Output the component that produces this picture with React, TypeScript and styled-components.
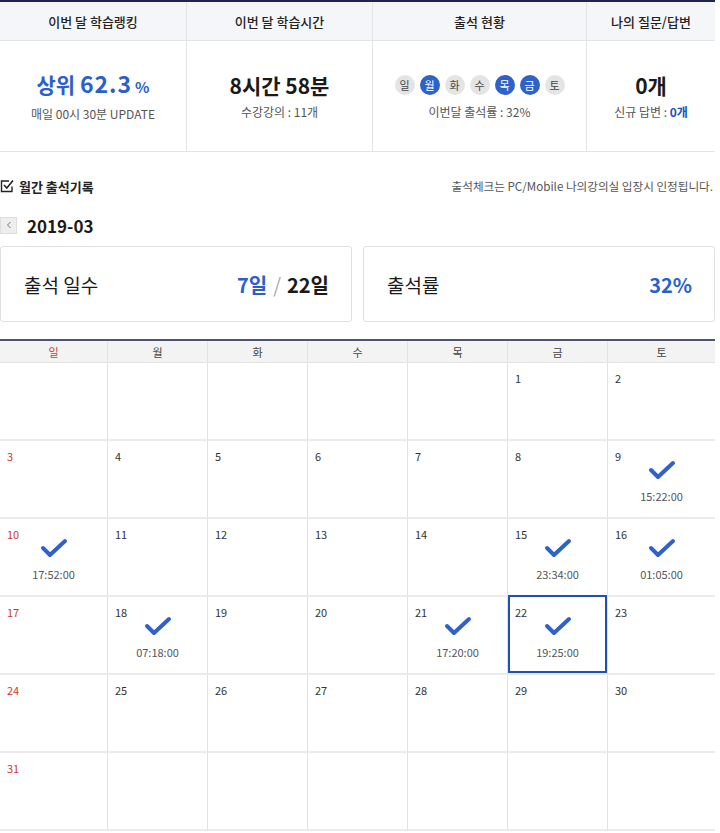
import React from 'react';
import styled, { createGlobalStyle } from 'styled-components';

const GlobalStyle = createGlobalStyle`
  html, body {
    margin: 0;
    padding: 0;
    background: #fff;
  }
  body {
    font-family: "Noto Sans CJK KR", "Noto Sans", sans-serif;
    color: #222;
  }
`;

const BLUE = '#2b5fcc';

const Page = styled.div`
  width: 715px;
`;

/* ---------- top stats ---------- */
const Stats = styled.div`
  display: grid;
  grid-template-columns: 186px 186px 214px 1fr;
  border-top: 2px solid #1c2550;
  border-bottom: 1px solid #e3e4e8;
`;

const StatCol = styled.div`
  display: flex;
  flex-direction: column;
  border-left: 1px solid #e3e4e8;
  &:first-child {
    border-left: none;
  }
`;

const StatHead = styled.div`
  height: 39px;
  display: flex;
  align-items: center;
  justify-content: center;
  background: #f5f6f8;
  border-bottom: 1px solid #e3e4e8;
  font-size: 13px;
  font-weight: 500;
  color: #222;
  padding-top: 1px;
  box-sizing: border-box;
`;

const StatBody = styled.div`
  height: 110px;
  display: flex;
  flex-direction: column;
  align-items: center;
  justify-content: center;
  gap: 3px;
  padding-bottom: 1px;
  box-sizing: border-box;
`;

const BigValue = styled.div<{ $blue?: boolean }>`
  font-size: 21px;
  font-weight: 700;
  line-height: 30px;
  color: ${({ $blue }) => ($blue ? BLUE : '#1a1a1a')};
`;

const Digits = styled.span`
  font-size: 23px;
  letter-spacing: 1px;
`;

const Percent = styled.span`
  font-size: 15px;
  margin-left: 3px;
`;

const SubText = styled.div`
  font-size: 12px;
  color: #555;
  line-height: 18px;
`;

const Strong = styled.span`
  color: #1a4fbf;
  font-weight: 700;
`;

const Days = styled.div`
  display: flex;
  gap: 5px;
  height: 30px;
  align-items: center;
`;

const DayDot = styled.span<{ $on?: boolean }>`
  width: 20px;
  height: 20px;
  border-radius: 50%;
  display: flex;
  align-items: center;
  justify-content: center;
  font-size: 11px;
  background: ${({ $on }) => ($on ? '#2f62c8' : '#e4e4e4')};
  color: ${({ $on }) => ($on ? '#fff' : '#444')};
`;

/* ---------- section heading ---------- */
const SectionHead = styled.div`
  display: flex;
  justify-content: space-between;
  align-items: center;
  margin-top: 25px;
  height: 18px;
`;

const SectionTitle = styled.div`
  display: flex;
  align-items: center;
  gap: 5px;
  font-size: 13px;
  font-weight: 700;
  color: #222;
`;

const Note = styled.div`
  font-size: 11.6px;
  color: #555;
  margin-right: 2px;
`;

const MonthNav = styled.div`
  display: flex;
  align-items: center;
  gap: 10px;
  margin-top: 20px;
  height: 20px;
`;

const PrevBtn = styled.button`
  width: 17px;
  height: 17px;
  padding: 0;
  border: 1px solid #ddd;
  background: #eee;
  color: #777;
  display: flex;
  align-items: center;
  justify-content: center;
  cursor: pointer;
`;

const Month = styled.div`
  font-size: 17px;
  font-weight: 700;
  color: #1a1a1a;
`;

/* ---------- summary cards ---------- */
const Cards = styled.div`
  display: grid;
  grid-template-columns: 352px 1fr;
  gap: 11px;
  margin-top: 11px;
`;

const Card = styled.div`
  height: 76px;
  box-sizing: border-box;
  border: 1px solid #dfe0e3;
  border-radius: 3px;
  display: flex;
  align-items: center;
  justify-content: space-between;
  padding: 0 22px 0 23px;
`;

const CardLabel = styled.div`
  font-size: 19px;
  color: #1a1a1a;
`;

const CardValue = styled.div`
  font-size: 20px;
  font-weight: 700;
  color: #1a1a1a;
`;

const Blue = styled.span`
  color: ${BLUE};
`;

const Slash = styled.span`
  color: #aaa;
  font-weight: 400;
  margin: 0 6px;
`;

/* ---------- calendar ---------- */
const Calendar = styled.div`
  display: grid;
  grid-template-columns: 107px repeat(5, 100px) 108px;
  margin-top: 17px;
  border-top: 2px solid #4d5470;
`;

const HeadCell = styled.div<{ $sun?: boolean }>`
  height: 21px;
  display: flex;
  align-items: center;
  justify-content: center;
  background: #f3f3f3;
  font-size: 11px;
  color: ${({ $sun }) => ($sun ? '#d0392b' : '#444')};
  border-left: 1px solid #e2e2e2;
  border-bottom: 1px solid #e2e2e2;
  &:first-child {
    border-left: none;
  }
`;

const Cell = styled.div<{ $first?: boolean; $today?: boolean }>`
  position: relative;
  height: 78px;
  box-sizing: border-box;
  border-left: ${({ $first }) => ($first ? 'none' : '1px solid #e2e2e2')};
  border-bottom: 2px solid #ebebeb;
  display: flex;
  flex-direction: column;
  align-items: center;
  &::after {
    content: '';
    display: ${({ $today }) => ($today ? 'block' : 'none')};
    position: absolute;
    inset: -2px 0 0 0;
    border: 2px solid #1f4fb8;
  }
`;

const DayNum = styled.span<{ $sun?: boolean }>`
  position: absolute;
  left: 7px;
  top: 7px;
  font-size: 11px;
  color: ${({ $sun }) => ($sun ? '#d0392b' : '#333')};
`;

const Check = styled.svg`
  margin-top: 18px;
  width: 30px;
  height: 22px;
`;

const Time = styled.div`
  margin-top: 7px;
  font-size: 11px;
  color: #555;
`;

const CheckIcon = () => (
  <Check viewBox="0 0 30 22">
    <polyline
      points="4,11 11,18 26,4"
      fill="none"
      stroke="#2f62c8"
      strokeWidth="4"
      strokeLinecap="round"
      strokeLinejoin="round"
    />
  </Check>
);

const weekDays = ['일', '월', '화', '수', '목', '금', '토'];
const attended: Record<number, string> = {
  9: '15:22:00',
  10: '17:52:00',
  15: '23:34:00',
  16: '01:05:00',
  18: '07:18:00',
  21: '17:20:00',
  22: '19:25:00',
};

const buildCells = () => {
  const cells: (number | null)[] = [];
  for (let i = 0; i < 5; i++) cells.push(null);
  for (let d = 1; d <= 31; d++) cells.push(d);
  while (cells.length % 7 !== 0) cells.push(null);
  return cells;
};

export default function App() {
  const cells = buildCells();
  return (
    <Page>
      <GlobalStyle />
      <Stats>
        <StatCol>
          <StatHead>이번 달 학습랭킹</StatHead>
          <StatBody>
            <BigValue $blue>
              상위 <Digits>62.3</Digits>
              <Percent>%</Percent>
            </BigValue>
            <SubText>매일 00시 30분 UPDATE</SubText>
          </StatBody>
        </StatCol>
        <StatCol>
          <StatHead>이번 달 학습시간</StatHead>
          <StatBody>
            <BigValue>8시간 58분</BigValue>
            <SubText>수강강의 : 11개</SubText>
          </StatBody>
        </StatCol>
        <StatCol>
          <StatHead>출석 현황</StatHead>
          <StatBody>
            <Days>
              {weekDays.map((d, i) => (
                <DayDot key={d} $on={i === 1 || i === 4 || i === 5}>
                  {d}
                </DayDot>
              ))}
            </Days>
            <SubText>이번달 출석률 : 32%</SubText>
          </StatBody>
        </StatCol>
        <StatCol>
          <StatHead>나의 질문/답변</StatHead>
          <StatBody>
            <BigValue>0개</BigValue>
            <SubText>
              신규 답변 : <Strong>0개</Strong>
            </SubText>
          </StatBody>
        </StatCol>
      </Stats>

      <SectionHead>
        <SectionTitle>
          <svg width="14" height="14" viewBox="0 0 14 14">
            <path d="M12 7.5V12.5H1.5V2H9" fill="none" stroke="#222" strokeWidth="1.4" />
            <path d="M4 6l2.8 3L13 1.5" fill="none" stroke="#222" strokeWidth="1.6" />
          </svg>
          월간 출석기록
        </SectionTitle>
        <Note>출석체크는 PC/Mobile 나의강의실 입장시 인정됩니다.</Note>
      </SectionHead>

      <MonthNav>
        <PrevBtn aria-label="이전 달">
          <svg width="6" height="8" viewBox="0 0 6 8">
            <path d="M4.5 1L1.5 4l3 3" fill="none" stroke="#777" strokeWidth="1" />
          </svg>
        </PrevBtn>
        <Month>2019-03</Month>
      </MonthNav>

      <Cards>
        <Card>
          <CardLabel>출석 일수</CardLabel>
          <CardValue>
            <Blue>7일</Blue>
            <Slash>/</Slash>
            22일
          </CardValue>
        </Card>
        <Card>
          <CardLabel>출석률</CardLabel>
          <CardValue>
            <Blue>32%</Blue>
          </CardValue>
        </Card>
      </Cards>

      <Calendar>
        {weekDays.map((d, i) => (
          <HeadCell key={d} $sun={i === 0}>
            {d}
          </HeadCell>
        ))}
        {cells.map((day, i) => (
          <Cell key={i} $first={i % 7 === 0} $today={day === 22}>
            {day && <DayNum $sun={i % 7 === 0}>{day}</DayNum>}
            {day && attended[day] && (
              <>
                <CheckIcon />
                <Time>{attended[day]}</Time>
              </>
            )}
          </Cell>
        ))}
      </Calendar>
    </Page>
  );
}
